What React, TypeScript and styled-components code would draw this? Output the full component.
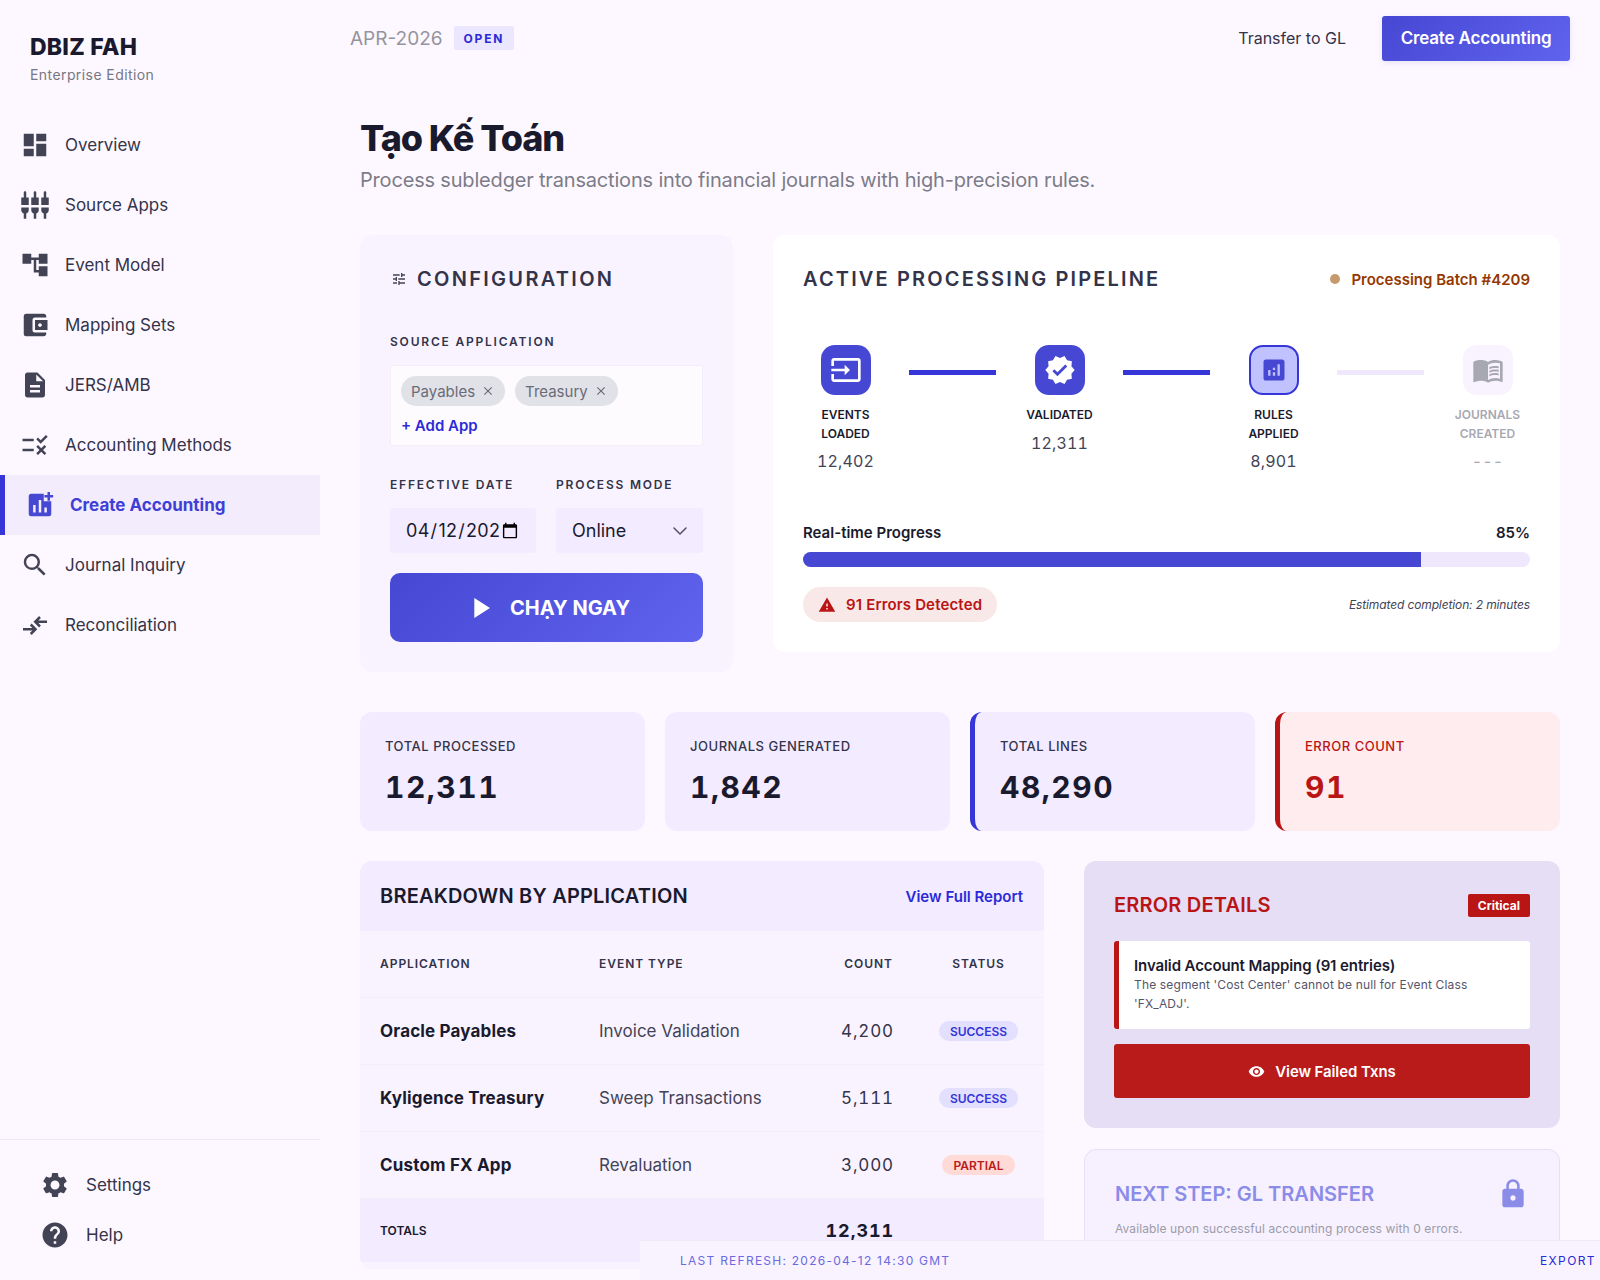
import React from "react";
import styled, { createGlobalStyle } from "styled-components";
import { ChevronDown } from "lucide-react";
import {
  MdAccountBalanceWallet,
  MdAccountTree,
  MdAnalytics,
  MdDashboard,
  MdDescription,
  MdHelp,
  MdInput,
  MdLock,
  MdMenuBook,
  MdPlayArrow,
  MdRule,
  MdSearch,
  MdSettings,
  MdSettingsInputComponent,
  MdClose,
  MdTune,
  MdVerified,
  MdVisibility,
  MdWarning,
} from "react-icons/md";

const GlobalStyle = createGlobalStyle`
  * { box-sizing: border-box; }
  html, body { margin: 0; padding: 0; height: 1280px; overflow: hidden; }
  body {
    background: #fdf8ff;
    color: #1a1a2e;
    font-family: Inter, "Noto Sans", "Liberation Sans", sans-serif;
  }
`;

// filled add_chart, the react-icons one is outline only
const AddChartIcon = ({ size }: { size: number }) => (
  <svg width={size} height={size} viewBox="0 0 24 24" fill="currentColor">
    <path
      fillRule="evenodd"
      d="M5 3h10v6h6v10a2 2 0 0 1-2 2H5a2 2 0 0 1-2-2V5a2 2 0 0 1 2-2zM6.5 12v6h2v-6zM11 8v10h2V8zM15.5 14v4h2v-4z"
    />
    <path d="M18 1.5h2v2.5h2.5v2H20v2.5h-2V6h-2.5V4H18z" />
  </svg>
);

const ReconcileIcon = ({ size }: { size: number }) => (
  <svg width={size} height={size} viewBox="0 0 24 24" fill="none" stroke="currentColor" strokeWidth="2">
    <path d="M2.4 15.4h9.6M8.6 11.6l3.8 3.8-3.8 3.8" />
    <path d="M21.6 9.4H12.4M16 5.6l-3.8 3.8 3.8 3.8" />
  </svg>
);

const navItems = [
  { label: "Overview", icon: MdDashboard },
  { label: "Source Apps", icon: MdSettingsInputComponent },
  { label: "Event Model", icon: MdAccountTree },
  { label: "Mapping Sets", icon: MdAccountBalanceWallet },
  { label: "JERS/AMB", icon: MdDescription },
  { label: "Accounting Methods", icon: MdRule },
  { label: "Create Accounting", icon: AddChartIcon, active: true },
  { label: "Journal Inquiry", icon: MdSearch },
  { label: "Reconciliation", icon: ReconcileIcon },
];

const steps = [
  { label: "Events Loaded", value: "12,402", icon: MdInput, state: "done" },
  { label: "Validated", value: "12,311", icon: MdVerified, state: "done" },
  { label: "Rules Applied", value: "8,901", icon: MdAnalytics, state: "current" },
  { label: "Journals Created", value: "---", icon: MdMenuBook, state: "todo" },
];

const stats = [
  { label: "Total Processed", value: "12,311", tone: "plain" },
  { label: "Journals Generated", value: "1,842", tone: "plain" },
  { label: "Total Lines", value: "48,290", tone: "accent" },
  { label: "Error Count", value: "91", tone: "error" },
];

const rows = [
  { app: "Oracle Payables", type: "Invoice Validation", count: "4,200", status: "SUCCESS" },
  { app: "Kyligence Treasury", type: "Sweep Transactions", count: "5,111", status: "SUCCESS" },
  { app: "Custom FX App", type: "Revaluation", count: "3,000", status: "PARTIAL" },
];

export default function App() {
  return (
    <>
      <GlobalStyle />
      <Shell>
        <Sidebar>
          <Brand>
            <BrandName>DBIZ FAH</BrandName>
            <BrandSub>Enterprise Edition</BrandSub>
          </Brand>
          <Nav>
            {navItems.map((item) => (
              <NavItem key={item.label} $active={item.active}>
                <item.icon size={30} />
                <span>{item.label}</span>
              </NavItem>
            ))}
          </Nav>
          <SideFooter>
            <FootItem>
              <MdSettings size={30} />
              <span>Settings</span>
            </FootItem>
            <FootItem>
              <MdHelp size={30} />
              <span>Help</span>
            </FootItem>
          </SideFooter>
        </Sidebar>
        <Main>
          <TopBar>
            <PeriodGroup>
              <Period>APR-2026</Period>
              <OpenBadge>OPEN</OpenBadge>
            </PeriodGroup>
            <TopActions>
              <TransferLink>Transfer to GL</TransferLink>
              <PrimaryButton>Create Accounting</PrimaryButton>
            </TopActions>
          </TopBar>
          <Content>
            <PageTitle>Tạo Kế Toán</PageTitle>
            <PageSub>Process subledger transactions into financial journals with high-precision rules.</PageSub>
            <TopGrid>
              <ConfigCard>
                <ConfigHead>
                  <MdTune size={16} />
                  <SpacedTitle>CONFIGURATION</SpacedTitle>
                </ConfigHead>
                <FieldLabel>SOURCE APPLICATION</FieldLabel>
                <TagBox>
                  <ChipRow>
                    <Chip>Payables <MdClose size={14} /></Chip>
                    <Chip>Treasury <MdClose size={14} /></Chip>
                  </ChipRow>
                  <AddApp>+ Add App</AddApp>
                </TagBox>
                <FieldGrid>
                  <div>
                    <FieldLabel>EFFECTIVE DATE</FieldLabel>
                    <DateInput type="date" defaultValue="2026-04-12" />
                  </div>
                  <div>
                    <FieldLabel>PROCESS MODE</FieldLabel>
                    <SelectBox>
                      Online
                      <ChevronDown size={24} strokeWidth={1.6} />
                    </SelectBox>
                  </div>
                </FieldGrid>
                <RunButton>
                  <MdPlayArrow size={34} />
                  CHẠY NGAY
                </RunButton>
              </ConfigCard>
              <PipelineCard>
                <PipelineHead>
                  <PipelineTitle>ACTIVE PROCESSING PIPELINE</PipelineTitle>
                  <BatchTag>
                    <BatchDot />
                    Processing Batch #4209
                  </BatchTag>
                </PipelineHead>
                <StepRow>
                  {steps.map((s, i) => (
                    <React.Fragment key={s.label}>
                      {i > 0 && <Connector $on={i < 3} />}
                      <Step>
                        <StepIcon $state={s.state}>
                          <s.icon size={s.state === "current" ? 28 : 32} />
                        </StepIcon>
                        <StepLabel $muted={s.state === "todo"}>{s.label}</StepLabel>
                        <StepValue $muted={s.state === "todo"}>{s.value}</StepValue>
                      </Step>
                    </React.Fragment>
                  ))}
                </StepRow>
                <ProgressHead>
                  <span>Real-time Progress</span>
                  <span>85%</span>
                </ProgressHead>
                <ProgressTrack>
                  <ProgressFill style={{ width: "85%" }} />
                </ProgressTrack>
                <ProgressFoot>
                  <ErrorPill>
                    <MdWarning size={18} />
                    91 Errors Detected
                  </ErrorPill>
                  <Estimate>Estimated completion: 2 minutes</Estimate>
                </ProgressFoot>
              </PipelineCard>
            </TopGrid>
            <StatGrid>
              {stats.map((s) => (
                <StatCard key={s.label} $tone={s.tone}>
                  <StatLabel $tone={s.tone}>{s.label}</StatLabel>
                  <StatValue $tone={s.tone}>{s.value}</StatValue>
                </StatCard>
              ))}
            </StatGrid>
            <BottomGrid>
              <TableCard>
                <TableHead>
                  <TableTitle>BREAKDOWN BY APPLICATION</TableTitle>
                  <ReportLink>View Full Report</ReportLink>
                </TableHead>
                <Table>
                  <colgroup>
                    <col style={{ width: 219 }} />
                    <col style={{ width: 224 }} />
                    <col style={{ width: 110 }} />
                    <col style={{ width: 131 }} />
                  </colgroup>
                  <thead>
                    <tr>
                      <Th>APPLICATION</Th>
                      <Th>EVENT TYPE</Th>
                      <Th $align="right">COUNT</Th>
                      <Th $align="center">STATUS</Th>
                    </tr>
                  </thead>
                  <tbody>
                    {rows.map((r) => (
                      <Tr key={r.app}>
                        <AppCell>{r.app}</AppCell>
                        <TypeCell>{r.type}</TypeCell>
                        <CountCell>{r.count}</CountCell>
                        <StatusCell>
                          <StatusBadge $partial={r.status === "PARTIAL"}>{r.status}</StatusBadge>
                        </StatusCell>
                      </Tr>
                    ))}
                    <TotalRow>
                      <TotalLabel colSpan={2}>TOTALS</TotalLabel>
                      <TotalValue>12,311</TotalValue>
                      <td />
                    </TotalRow>
                  </tbody>
                </Table>
              </TableCard>
              <SideColumn>
                <ErrorCard>
                  <ErrorHead>
                    <ErrorTitle>ERROR DETAILS</ErrorTitle>
                    <CriticalBadge>Critical</CriticalBadge>
                  </ErrorHead>
                  <ErrorBox>
                    <ErrorBoxTitle>Invalid Account Mapping (91 entries)</ErrorBoxTitle>
                    <ErrorBoxText>The segment 'Cost Center' cannot be null for Event Class 'FX_ADJ'.</ErrorBoxText>
                  </ErrorBox>
                  <FailedButton>
                    <MdVisibility size={17} />
                    View Failed Txns
                  </FailedButton>
                </ErrorCard>
                <NextCard>
                  <NextHead>
                    <NextTitle>NEXT STEP: GL TRANSFER</NextTitle>
                    <MdLock size={32} />
                  </NextHead>
                  <NextText>Available upon successful accounting process with 0 errors.</NextText>
                </NextCard>
              </SideColumn>
            </BottomGrid>
          </Content>
          <StatusBar>
            <span>LAST REFRESH: 2026-04-12 14:30 GMT</span>
            <ExportLink>EXPORT</ExportLink>
          </StatusBar>
        </Main>
      </Shell>
    </>
  );
}

const Shell = styled.div`
  display: flex;
  width: 1600px;
  height: 1280px;
  overflow: hidden;
`;

const Sidebar = styled.aside`
  width: 320px;
  flex: none;
  display: flex;
  flex-direction: column;
`;
const Brand = styled.div`
  padding: 34px 30px 0;
  height: 115px;
`;
const BrandName = styled.div`
  font-size: 23px;
  font-weight: 800;
  line-height: 26px;
  letter-spacing: 0.01em;
  color: #1a1a2e;
`;
const BrandSub = styled.div`
  margin-top: 5px;
  font-size: 14px;
  line-height: 20px;
  letter-spacing: 0.03em;
  color: #767684;
`;
const Nav = styled.nav`
  display: flex;
  flex-direction: column;
`;
const NavItem = styled.div<{ $active?: boolean }>`
  display: flex;
  align-items: center;
  gap: 15px;
  height: 60px;
  padding-left: 20px;
  font-size: 17px;
  font-weight: ${(p) => (p.$active ? 700 : 400)};
  color: ${(p) => (p.$active ? "#3f3fd6" : "#33334a")};
  background: ${(p) => (p.$active ? "#f2ecfd" : "transparent")};
  border-left: ${(p) => (p.$active ? "5px solid #3535d8" : "none")};
  svg {
    color: ${(p) => (p.$active ? "#4648d4" : "#434356")};
    flex: none;
  }
`;
const SideFooter = styled.div`
  margin-top: auto;
  border-top: 1px solid #efe9f6;
  padding: 30px 40px 0;
  height: 141px;
  display: flex;
  flex-direction: column;
  gap: 20px;
`;
const FootItem = styled.div`
  display: flex;
  align-items: center;
  gap: 16px;
  height: 30px;
  font-size: 17px;
  color: #33334a;
  svg {
    color: #434356;
  }
`;

const Main = styled.main`
  position: relative;
  flex: 1;
  min-width: 0;
  height: 1280px;
  overflow: hidden;
`;
const TopBar = styled.header`
  height: 76px;
  display: flex;
  align-items: center;
  justify-content: space-between;
  padding: 0 30px;
`;
const PeriodGroup = styled.div`
  display: flex;
  align-items: center;
  gap: 11px;
`;
const Period = styled.span`
  font-size: 19px;
  color: #94949e;
`;
const OpenBadge = styled.span`
  display: flex;
  align-items: center;
  height: 24px;
  padding: 0 10px;
  background: #ebe7ff;
  border-radius: 2px;
  color: #2a2ad8;
  font-size: 12px;
  font-weight: 700;
  letter-spacing: 0.15em;
`;
const TopActions = styled.div`
  display: flex;
  align-items: center;
  gap: 36px;
`;
const TransferLink = styled.span`
  font-size: 16px;
  color: #33334a;
`;
const PrimaryButton = styled.button`
  width: 188px;
  height: 45px;
  border: none;
  border-radius: 3px;
  background: linear-gradient(135deg, #4648d4, #6063ee);
  color: #fff;
  font-family: inherit;
  font-size: 17px;
  font-weight: 600;
  letter-spacing: -0.01em;
  box-shadow: 0 2px 6px rgba(70, 72, 212, 0.12);
`;
const Content = styled.div`
  padding: 39px 40px 0;
`;
const PageTitle = styled.h1`
  margin: 0;
  font-size: 36px;
  line-height: 46px;
  font-weight: 800;
  letter-spacing: -0.03em;
  color: #1a1a2e;
`;
const PageSub = styled.p`
  margin: 4px 0 0;
  font-size: 20px;
  line-height: 30px;
  letter-spacing: -0.18px;
  color: #7c7c88;
`;
const TopGrid = styled.div`
  margin-top: 40px;
  display: grid;
  grid-template-columns: 373px 787px;
  gap: 40px;
  align-items: start;
`;
const ConfigCard = styled.section`
  background: #f8f3ff;
  border-radius: 12px;
  padding: 30px;
`;
const ConfigHead = styled.div`
  display: flex;
  align-items: center;
  gap: 10px;
  height: 28px;
  margin-bottom: 41px;
  svg {
    color: #434356;
    margin-left: 1px;
  }
`;
const SpacedTitle = styled.h2`
  margin: 0;
  font-size: 20px;
  line-height: 28px;
  font-weight: 600;
  letter-spacing: 2.3px;
  color: #33334a;
`;
const PipelineTitle = styled(SpacedTitle)`
  letter-spacing: 2.15px;
`;
const FieldLabel = styled.div`
  font-size: 12px;
  line-height: 16px;
  font-weight: 600;
  letter-spacing: 0.15em;
  color: #33334a;
`;
const TagBox = styled.div`
  margin-top: 15px;
  height: 81px;
  padding: 10px;
  background: #fefbff;
  border: 1px solid #f3eefa;
  border-radius: 2px;
`;
const ChipRow = styled.div`
  display: flex;
  gap: 10px;
`;
const Chip = styled.span`
  display: flex;
  align-items: center;
  gap: 6px;
  height: 30px;
  padding: 0 10px;
  border-radius: 15px;
  background: #e0e2e8;
  color: #6b6b78;
  font-size: 15px;
`;
const AddApp = styled.div`
  margin-top: 10px;
  font-size: 15px;
  line-height: 20px;
  font-weight: 600;
  color: #2a2ad8;
`;
const FieldGrid = styled.div`
  margin-top: 31px;
  display: grid;
  grid-template-columns: 146px 147px;
  gap: 20px;
  ${FieldLabel} {
    margin-bottom: 15px;
  }
`;
const DateInput = styled.input`
  display: block;
  width: 100%;
  height: 45px;
  padding: 0 15px;
  border: none;
  border-radius: 3px;
  background: #f3ebff;
  color: #1a1a2e;
  font-family: inherit;
  font-size: 18px;
  letter-spacing: 0.3px;
`;
const SelectBox = styled.div`
  display: flex;
  align-items: center;
  justify-content: space-between;
  height: 45px;
  padding: 0 11px 0 16px;
  border-radius: 3px;
  background: #f3ebff;
  color: #1a1a2e;
  font-size: 18px;
  svg {
    color: #565668;
  }
`;
const RunButton = styled.button`
  margin-top: 20px;
  width: 100%;
  height: 69px;
  display: flex;
  align-items: center;
  justify-content: center;
  gap: 13px;
  border: none;
  border-radius: 10px;
  background: linear-gradient(135deg, #4648d4, #6063ee);
  color: #fff;
  font-family: inherit;
  font-size: 20px;
  font-weight: 700;
`;

const PipelineCard = styled.section`
  background: #ffffff;
  border-radius: 12px;
  padding: 30px;
`;
const PipelineHead = styled.div`
  display: flex;
  align-items: center;
  justify-content: space-between;
  height: 28px;
`;
const BatchTag = styled.div`
  display: flex;
  align-items: center;
  gap: 11px;
  font-size: 15px;
  font-weight: 600;
  color: #943700;
`;
const BatchDot = styled.span`
  width: 10px;
  height: 10px;
  border-radius: 50%;
  background: #c59a6d;
`;
const StepRow = styled.div`
  margin-top: 52px;
  display: flex;
  align-items: flex-start;
`;
const Step = styled.div`
  width: 85px;
  flex: none;
  display: flex;
  flex-direction: column;
  align-items: center;
  text-align: center;
`;
const StepIcon = styled.div<{ $state: string }>`
  width: 50px;
  height: 50px;
  display: flex;
  align-items: center;
  justify-content: center;
  border-radius: 14px;
  background: ${(p) => (p.$state === "done" ? "#4648d4" : p.$state === "current" ? "#c0c1ff" : "#f8f3ff")};
  border: ${(p) => (p.$state === "current" ? "2px solid #3535d8" : "none")};
  color: ${(p) => (p.$state === "done" ? "#fff" : p.$state === "current" ? "#4648d4" : "#a8a8b2")};
`;
const StepLabel = styled.div<{ $muted?: boolean }>`
  margin-top: 11px;
  font-size: 12px;
  line-height: 18.5px;
  font-weight: 600;
  text-transform: uppercase;
  color: ${(p) => (p.$muted ? "#a8a8b2" : "#1a1a2e")};
`;
const StepValue = styled.div<{ $muted?: boolean }>`
  margin-top: 7px;
  font-size: 16px;
  line-height: 22px;
  letter-spacing: 0.01em;
  font-variant-numeric: tabular-nums;
  color: ${(p) => (p.$muted ? "#a8a8b2" : "#434356")};
`;
const Connector = styled.div<{ $on: boolean }>`
  flex: 1;
  height: 5px;
  margin: 25px 21px 0;
  background: ${(p) => (p.$on ? "#3535d8" : "#efe7fb")};
`;
const ProgressHead = styled.div`
  margin-top: 51px;
  display: flex;
  justify-content: space-between;
  font-size: 15px;
  line-height: 20px;
  font-weight: 600;
  color: #1a1a2e;
`;
const ProgressTrack = styled.div`
  margin-top: 9px;
  height: 15px;
  border-radius: 8px;
  background: #efe7fb;
  overflow: hidden;
`;
const ProgressFill = styled.div`
  height: 100%;
  background: #4648d4;
`;
const ProgressFoot = styled.div`
  margin-top: 20px;
  display: flex;
  align-items: center;
  justify-content: space-between;
`;
const ErrorPill = styled.div`
  display: flex;
  align-items: center;
  gap: 10px;
  height: 35px;
  padding: 0 15px;
  border-radius: 18px;
  background: #f9e8e8;
  color: #b91515;
  font-size: 15px;
  font-weight: 600;
  letter-spacing: 0.01em;
`;
const Estimate = styled.span`
  font-size: 12px;
  font-style: italic;
  letter-spacing: -0.01em;
  color: #434356;
`;

const StatGrid = styled.div`
  margin-top: 40px;
  display: grid;
  grid-template-columns: repeat(4, 1fr);
  gap: 20px;
`;
const StatCard = styled.div<{ $tone: string }>`
  height: 119px;
  padding: 25px;
  border-radius: 12px;
  background: ${(p) => (p.$tone === "error" ? "#ffecef" : "#f3ebff")};
  border-left: ${(p) =>
    p.$tone === "error" ? "5px solid #b91515" : p.$tone === "accent" ? "5px solid #3535d8" : "none"};
`;
const StatLabel = styled.div<{ $tone: string }>`
  font-size: 13px;
  line-height: 18px;
  font-weight: 500;
  letter-spacing: 0.04em;
  text-transform: uppercase;
  color: ${(p) => (p.$tone === "error" ? "#b91515" : "#33334a")};
`;
const StatValue = styled.div<{ $tone: string }>`
  margin-top: 11px;
  font-size: 30px;
  line-height: 42px;
  font-weight: 700;
  letter-spacing: 0.05em;
  font-variant-numeric: tabular-nums;
  color: ${(p) => (p.$tone === "error" ? "#b91515" : "#1a1a2e")};
`;

const BottomGrid = styled.div`
  margin-top: 30px;
  display: grid;
  grid-template-columns: 684px 476px;
  gap: 40px;
  align-items: start;
`;
const TableCard = styled.section`
  background: #f8f3ff;
  border-radius: 12px;
  overflow: hidden;
  padding-bottom: 7px;
`;
const TableHead = styled.div`
  height: 70px;
  display: flex;
  align-items: center;
  justify-content: space-between;
  padding: 0 21px 0 20px;
  background: #f3ebff;
`;
const TableTitle = styled.h3`
  margin: 0;
  font-size: 20px;
  font-weight: 600;
  letter-spacing: 0.01em;
  color: #1a1a2e;
`;
const ReportLink = styled.span`
  font-size: 15px;
  font-weight: 600;
  color: #2a2ad8;
`;
const Table = styled.table`
  width: 100%;
  table-layout: fixed;
  border-collapse: collapse;
`;
const Th = styled.th<{ $align?: string }>`
  height: 66px;
  padding: 0 20px;
  text-align: ${(p) => p.$align || "left"};
  font-size: 12px;
  font-weight: 600;
  letter-spacing: 0.08em;
  color: #33334a;
  border-bottom: 1px solid #f3ecfb;
`;
const Tr = styled.tr`
  height: 67px;
  border-bottom: 1px solid #f3ecfb;
`;
const AppCell = styled.td`
  padding: 0 0 0 20px;
  font-size: 17px;
  font-weight: 700;
  letter-spacing: 0.01em;
  color: #1a1a2e;
`;
const TypeCell = styled.td`
  padding: 0 20px;
  font-size: 17px;
  color: #434356;
`;
const CountCell = styled.td`
  padding: 0 19px 0 20px;
  text-align: right;
  font-size: 17px;
  letter-spacing: 0.05em;
  font-variant-numeric: tabular-nums;
  color: #33334a;
`;
const StatusCell = styled.td`
  text-align: center;
`;
const StatusBadge = styled.span<{ $partial: boolean }>`
  display: inline-flex;
  align-items: center;
  height: 20px;
  padding: 0 11px;
  border-radius: 10px;
  font-size: 12px;
  font-weight: 600;
  background: ${(p) => (p.$partial ? "#ffdad6" : "#e2dfff")};
  color: ${(p) => (p.$partial ? "#ba1a1a" : "#3535d8")};
`;
const TotalRow = styled.tr`
  height: 64px;
  background: #f3ebff;
`;
const TotalLabel = styled.td`
  padding: 0 20px;
  font-size: 12px;
  font-weight: 600;
  color: #1a1a2e;
`;
const TotalValue = styled.td`
  padding: 0 19px 0 0;
  text-align: right;
  font-size: 18px;
  font-weight: 700;
  letter-spacing: 0.05em;
  font-variant-numeric: tabular-nums;
  color: #1a1a2e;
`;

const SideColumn = styled.div`
  display: flex;
  flex-direction: column;
  gap: 21px;
`;
const ErrorCard = styled.section`
  background: #e6def5;
  border-radius: 12px;
  padding: 30px;
`;
const ErrorHead = styled.div`
  display: flex;
  align-items: center;
  justify-content: space-between;
  height: 28px;
  margin-bottom: 22px;
`;
const ErrorTitle = styled.h3`
  margin: 0;
  font-size: 20px;
  font-weight: 600;
  letter-spacing: 0.01em;
  color: #b91515;
`;
const CriticalBadge = styled.span`
  display: flex;
  align-items: center;
  height: 23px;
  padding: 0 10px;
  border-radius: 2px;
  background: #b91515;
  color: #fff;
  font-size: 12px;
  font-weight: 700;
`;
const ErrorBox = styled.div`
  height: 88px;
  padding: 15px;
  background: #fff;
  border-left: 5px solid #b91515;
  border-radius: 3px;
`;
const ErrorBoxTitle = styled.div`
  font-size: 15px;
  line-height: 20px;
  font-weight: 600;
  letter-spacing: -0.1px;
  color: #1a1a2e;
`;
const ErrorBoxText = styled.div`
  font-size: 12px;
  line-height: 18.5px;
  letter-spacing: 0.15px;
  color: #55556a;
`;
const FailedButton = styled.button`
  margin-top: 15px;
  width: 100%;
  height: 54px;
  display: flex;
  align-items: center;
  justify-content: center;
  gap: 10px;
  border: none;
  border-radius: 3px;
  background: #b91a1a;
  color: #fff;
  font-family: inherit;
  font-size: 15px;
  font-weight: 600;
  letter-spacing: -0.1px;
`;
const NextCard = styled.section`
  height: 130px;
  padding: 30px;
  border: 1px solid #e6dff5;
  border-radius: 12px;
  background: #f6f0ff;
`;
const NextHead = styled.div`
  display: flex;
  align-items: center;
  justify-content: space-between;
  height: 28px;
  svg {
    color: #8b8ce8;
  }
`;
const NextTitle = styled.h3`
  margin: 0;
  font-size: 20px;
  font-weight: 600;
  color: #8b8ce8;
`;
const NextText = styled.p`
  margin: 12px 0 0;
  font-size: 12px;
  line-height: 18px;
  letter-spacing: 0.1px;
  color: #9c9ca8;
`;

const StatusBar = styled.footer`
  position: absolute;
  left: 320px;
  right: 0;
  bottom: 0;
  height: 40px;
  display: flex;
  align-items: center;
  justify-content: space-between;
  padding: 0 4px 0 40px;
  background: #f8f3ff;
  border-top: 1px solid #efe9f6;
  font-size: 12px;
  letter-spacing: 1.25px;
  color: #6a6ae0;
`;
const ExportLink = styled.span`
  letter-spacing: 1.4px;
  color: #2a2ad8;
`;
